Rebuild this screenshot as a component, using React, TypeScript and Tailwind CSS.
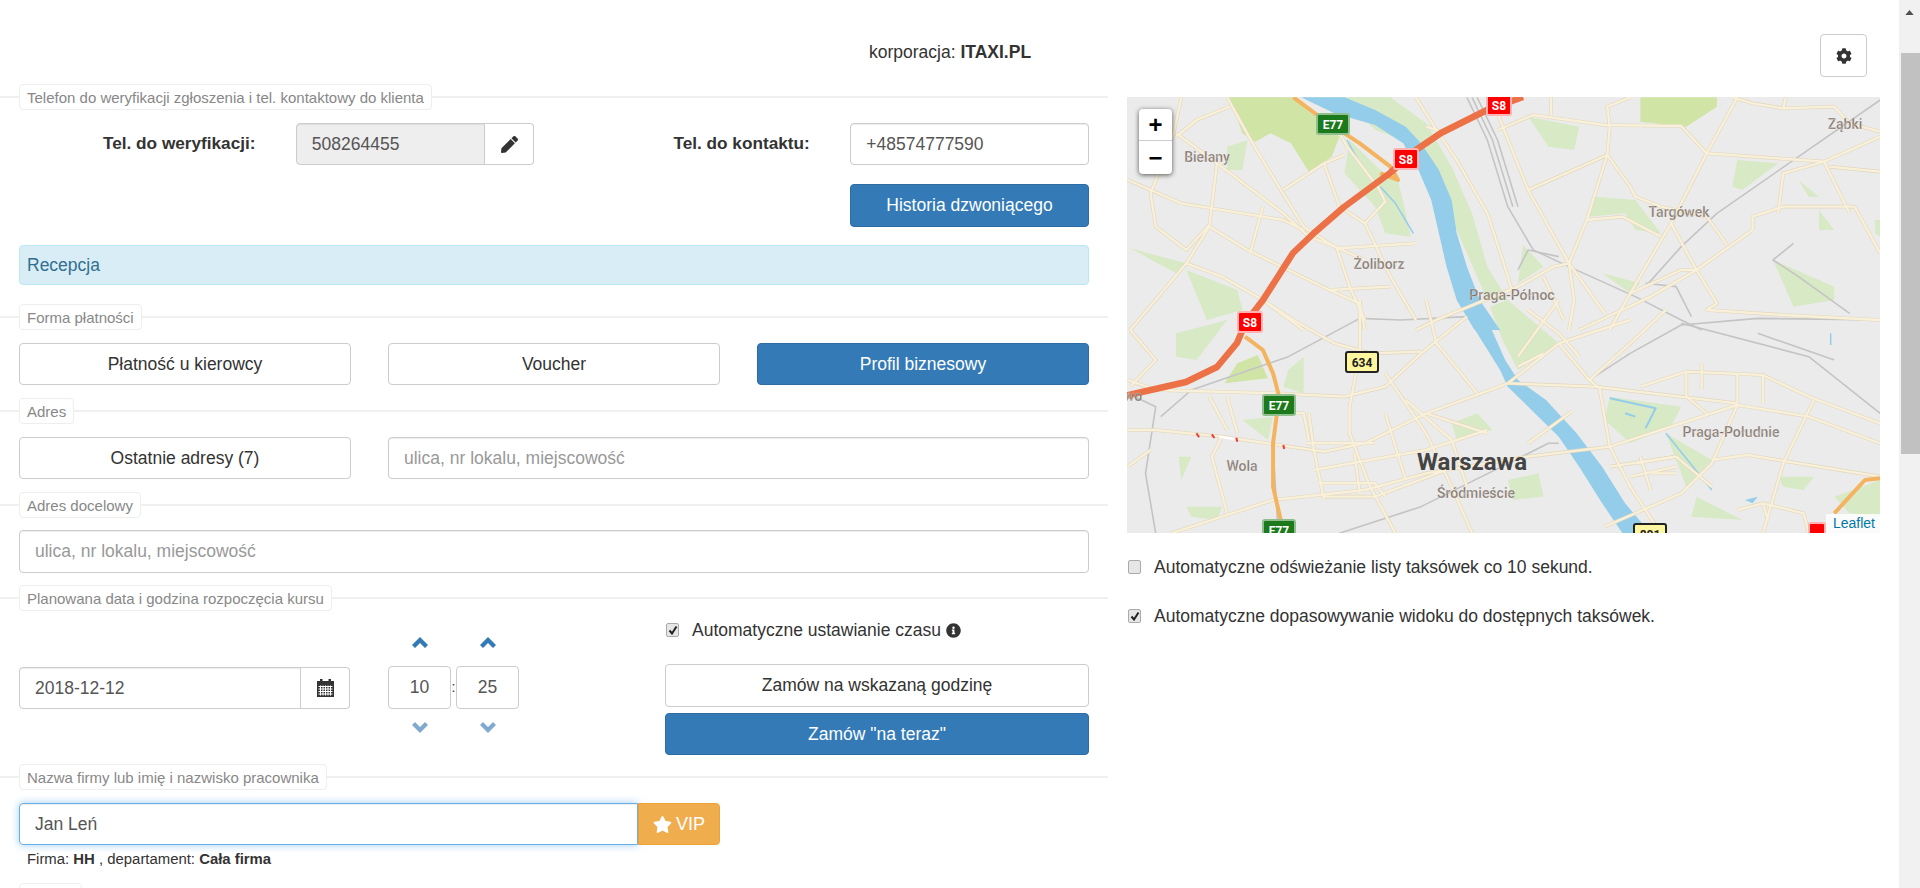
import type { ReactNode } from "react";
import { FaCog, FaInfoCircle, FaPen, FaStar } from "react-icons/fa";

const FONT = "font-['Liberation_Sans',Arial,sans-serif]";

const inputBase =
  "h-[42px] rounded-[4px] border border-[#ccc] shadow-[inset_0_1px_1px_rgba(0,0,0,0.075)] px-[15px] text-[17.5px] text-[#555] flex items-center";
const btnDefault =
  "h-[42px] flex items-center justify-center rounded-[4px] border border-[#ccc] bg-white text-[17.5px] text-[#333]";
const btnPrimary =
  "flex items-center justify-center rounded-[4px] border border-[#2e6da4] bg-[#337ab7] text-[17.5px] text-white";

function Legend({ children, className = "" }: { children: ReactNode; className?: string }) {
  return (
    <div className={`flex items-center h-[26px] ${className}`}>
      <span className="h-[2px] w-[19px] bg-[#f0f0f0]" />
      <span className="h-[26px] flex items-center rounded-[4px] border border-[#eee] bg-white px-[7px] text-[15px] leading-none text-[#888] whitespace-nowrap">
        {children}
      </span>
      <span className="h-[2px] flex-1 bg-[#f0f0f0]" />
    </div>
  );
}

function Check({ checked = false }: { checked?: boolean }) {
  return (
    <span className="flex h-[14px] w-[13px] shrink-0 items-center justify-center rounded-[2px] border border-[#aaa] bg-[#e6e6e6]">
      {checked && (
        <svg viewBox="0 0 10 10" className="h-[10px] w-[10px]">
          <path d="M1.5 5.5 L4 8.5 L8.5 1.5" fill="none" stroke="#222" strokeWidth="2" />
        </svg>
      )}
    </span>
  );
}

function Chevron({ up, className }: { up?: boolean; className: string }) {
  return (
    <svg viewBox="0 0 16 11" className={`h-[11px] w-[16px] ${className}`}>
      <path d={up ? "M8 0L16 8L13 11L8 6L3 11L0 8Z" : "M8 11L16 3L13 0L8 5L3 0L0 3Z"} fill="currentColor" />
    </svg>
  );
}

function CalendarIcon() {
  return (
    <svg viewBox="0 0 17 18" className="h-[18px] w-[17px]">
      <path d="M3 0h2.5v2H3zM11.5 0H14v2h-2.5z" fill="#333" />
      <path d="M0 2h17v16H0z" fill="#333" />
      <path
        d="M1.5 7.5h14M1.5 10h14M1.5 12.5h14M1.5 15h14M3.5 6.5v10M6 6.5v10M8.5 6.5v10M11 6.5v10M13.5 6.5v10"
        stroke="#fff"
        strokeWidth="1"
        fill="none"
      />
    </svg>
  );
}

function Spinner({ value }: { value: string }) {
  return (
    <div className="flex w-[63px] flex-col items-center">
      <Chevron up className="mt-[26px] text-[#337ab7]" />
      <div className="mt-[18px] flex h-[43px] w-[63px] items-center justify-center rounded-[4px] border border-[#ccc] text-[17.5px] text-[#555]">
        {value}
      </div>
      <Chevron className="mt-[13px] text-[#7fa9cf]" />
    </div>
  );
}

const ROAD = "#f8f0da";
const EDGE = "#e2d7bc";

// drogi, w ukladzie wycinka gornej i dolnej czesci mapy
const roadsTop = [
  "M210 292L260 430L315 570L360 680L420 740L480 780",
  "M110 400L190 490L320 640L370 710L430 745L580 730",
  "M15 540L60 570L120 610L320 660L360 690",
  "M120 292L105 400L60 580L70 680L130 750L175 675",
  "M190 490L175 680L130 790L20 990",
  "M110 410L150 360L215 320",
  "M130 790L200 830L280 900L360 990",
  "M175 680L250 750L410 870L470 910L480 990",
  "M320 570L400 490L440 465",
  "M400 490L430 620L480 670L520 605L505 560L445 440L430 400",
  "M280 620L255 760",
  "M425 745L450 860L480 960",
  "M480 670L530 830L580 960",
  "M580 292L620 390L660 480L720 640L750 780L770 880",
  "M740 340L800 570L880 790L950 940",
  "M740 390L810 345L950 375L1100 378L1150 460L1380 485L1490 410",
  "M1150 460L1210 292",
  "M1150 460L1080 670L1000 880L960 990",
  "M800 570L955 465L1000 560L1010 590L1060 620L1150 650L1190 735",
  "M955 465L960 380L955 320L1000 292",
  "M955 465L915 660L880 790",
  "M915 660L985 650L1060 710",
  "M1380 485L1300 520L1290 640",
  "M1390 500L1490 515",
  "M1240 690L1130 810L1040 890L900 990",
  "M880 790L850 800L780 860L620 960L580 990",
  "M1080 670L1130 810L1170 910L1150 930L1300 945L1490 960",
  "M1200 292L1240 310L1300 325L1400 320L1430 370L1490 395",
  "M1240 690L1240 650L1300 620L1440 620L1490 760",
  "M845 292L845 345",
  "M1300 325L1305 292",
  "M410 870L530 860",
  "M600 380L640 400",
  "M1000 880L1100 810L1130 810",
  "M880 790L890 900L880 990",
  "M830 830L870 960",
  "M1380 485L1430 640",
];

const roadsBottom = [
  "M15 390L70 390L200 410L400 455L480 430L600 340L700 285L760 250L860 130",
  "M15 240L70 270L300 280L440 290L520 260L590 160L680 50",
  "M450 320L470 160L470 0",
  "M280 0L340 60L420 130L490 160L590 155",
  "M520 220L600 400L650 560L690 700",
  "M450 320L450 400L490 560L540 700",
  "M200 650L300 600L480 570L600 520L800 470L960 440L1210 315L1350 350L1490 430",
  "M760 250L930 260L1210 310",
  "M960 440L1000 560L1060 700",
  "M1210 315L1160 490L1100 580L950 680",
  "M1160 480L1230 465L1490 530",
  "M1360 300L1300 490L1260 700",
  "M1210 630L1260 610L1340 640L1350 700",
  "M885 335L800 430",
  "M860 130L920 240L940 265L960 440",
  "M920 240L1000 130L1070 30",
  "M1020 260L1110 215L1260 225L1350 290L1490 370",
  "M1110 215L1110 290L1150 340",
  "M175 290L210 390",
  "M210 290L230 400",
  "M200 410L180 470L210 640",
  "M370 340L380 450L400 600",
  "M365 430L500 430",
  "M390 550L500 550L520 590",
  "M20 90L70 180L20 260",
  "M600 0L620 130L700 280",
  "M860 0L780 170",
  "M1140 190L1140 270",
  "M1040 520L1090 520",
  "M960 500L1090 470L1160 560",
  "M380 510L600 450L720 390",
  "M400 590L500 590L640 510",
  "M560 300L650 420L680 560",
  "M600 340L720 400",
  "M340 340L360 340L370 420",
  "M460 460L470 580",
  "M520 340L560 540",
  "M1010 490L1090 470",
  "M1000 530L1090 500",
  "M1020 470L1040 570",
  "M1210 220L1210 310",
  "M1260 225L1260 310",
  "M1270 660L1260 610",
  "M800 30L860 100L900 170",
  "M830 160L780 200",
  "M860 130L1000 60",
  "M100 700L200 650",
  "M60 450L15 500",
];

const railsTop = [
  "M680 292L720 420L760 620L810 750L880 800L1010 890L1100 960L1140 990",
  "M690 292L730 420L770 620",
  "M700 292L740 420L780 620",
  "M1490 300L1330 470L1170 640L1100 740L1030 860",
  "M1320 730L1280 780L1330 830L1430 940",
  "M1030 850L1090 860L1120 950",
  "M780 810L800 750L860 770",
];

const railsBottom = [
  "M15 280L70 320L50 520L70 700",
  "M80 350L140 270L330 170L470 55L550 60L680 50",
  "M930 230L1000 160L1100 75L1250 55L1490 60",
  "M1100 70L1350 170L1490 340",
  "M1250 100L1400 180",
  "M300 440L310 700",
  "M430 700L590 620L840 430L860 430",
];

function Badge({ x, y, w, fill, edge, text, color = "#fff" }: { x: number; y: number; w: number; fill: string; edge: string; text: string; color?: string }) {
  return (
    <g>
      <rect x={x - w / 2} y={y - 10} width={w} height={20} rx={2} fill={fill} stroke={edge} strokeWidth={2} />
      <text x={x} y={y + 4.5} textAnchor="middle" fontSize="12" fontWeight="700" fill={color} fontFamily="Roboto, sans-serif">
        {text}
      </text>
    </g>
  );
}

function Place({ x, y, text, size = 14 }: { x: number; y: number; text: string; size?: number }) {
  return (
    <text x={x} y={y} textAnchor="middle" fontSize={size} fontWeight="500" fill="#7f7168" stroke="#ffffff" strokeOpacity="0.5" strokeWidth="0.4" fontFamily="Roboto, sans-serif">
      {text}
    </text>
  );
}

function MapDrawing() {
  const topTf = "translate(1120 0) scale(0.5102 0.3333)";
  const botTf = "translate(1120 300) scale(0.5102 0.3333)";
  const strokes = (d: string, color: string, width: number) => (
    <path key={d + color} d={d} fill="none" stroke={color} strokeWidth={width} strokeLinejoin="round" vectorEffect="non-scaling-stroke" />
  );
  return (
    <svg viewBox="1127 97 753 436" className="block h-[436px] w-[753px]">
      <defs>
        <filter id="soft" x="0" y="0" width="100%" height="100%">
          <feGaussianBlur stdDeviation="0.4" />
        </filter>
      </defs>
      <rect x="1127" y="97" width="753" height="436" fill="#ebebeb" />
      <g filter="url(#soft)">
        {/* parki */}
        <g transform={topTf} fill="#d0e4a6">
          <path d="M215 292L340 292L430 410L415 470L370 515L335 430L295 400L265 425L240 400Z" />
          <path d="M1020 292L1170 292L1170 320L1110 380L1020 365Z" />
        </g>
        <g transform={topTf} fill="#d8e9c6">
          <path d="M440 292L530 292L600 370L650 500L690 640L720 800L760 900L720 900L680 760L640 620L610 500L575 430L500 390Z" />
          <path d="M450 420L510 510L545 540L560 640L570 710L520 700L500 620L440 520Z" />
          <path d="M210 440L250 420L240 510L210 510Z" />
          <path d="M800 350L900 380L890 450L840 440Z" />
          <path d="M20 745L130 790L110 820Z" />
          <path d="M130 810L230 870L240 930L170 960Z" />
          <path d="M1210 480L1290 490L1220 570L1200 560Z" />
          <path d="M930 590L1010 600L1060 700L1010 690L990 640L920 650Z" />
          <path d="M790 735L830 800L780 850Z" />
          <path d="M945 820L1020 850L1000 880Z" />
          <path d="M1280 780L1400 860L1400 900L1320 920Z" />
          <path d="M1370 630L1400 690L1370 690Z" />
          <path d="M1480 660L1490 660L1490 710L1480 700Z" />
          <path d="M1330 540L1370 590L1350 590Z" />
        </g>
        <g transform={botTf} fill="#d8e9c6">
          <path d="M205 250L230 190L270 165L290 235Z" fill="#d0e4a6" />
          <path d="M960 290L1100 320L1080 380L1000 430L950 360Z" />
          <path d="M725 20L760 0L860 130L830 160L780 210L750 120Z" />
          <path d="M1070 400L1160 480L1110 560Z" />
          <path d="M1130 590L1220 660L1120 650Z" />
          <path d="M110 100L210 60L150 180L110 170Z" />
          <path d="M330 210L360 170L360 280L320 260Z" />
          <path d="M650 370L700 340L730 390L660 420Z" />
          <path d="M115 470L140 470L120 540Z" />
          <path d="M240 360L300 350L290 420Z" />
          <path d="M1400 590L1490 540L1490 650L1430 640Z" />
          <path d="M130 620L200 620L190 660L140 650Z" />
          <path d="M760 540L820 520L830 590L770 600Z" />
          <path d="M1290 530L1360 530L1340 570L1300 560Z" />
        </g>
        {/* Wisla */}
        <g transform={topTf}>
          <path d="M355 292L420 340L500 375L555 430L585 510L610 600L625 700L640 800L660 900L695 990L745 990L705 900L680 800L660 700L650 600L625 510L590 430L560 380L500 330L440 292Z" fill="#94cdea" />
          {strokes("M510 560L540 610L575 700", "#94cdea", 1.5)}
          {strokes("M445 420L470 490", "#94cdea", 1.5)}
        </g>
        <g transform={botTf}>
          <path d="M660 0L700 100L745 210L760 260L800 320L860 410L900 500L945 610L985 700L1040 700L990 610L945 500L895 400L835 300L780 240L755 180L720 60L705 0Z" fill="#94cdea" />
          {strokes("M960 295L1050 325L1030 385M990 340L1010 350", "#94cdea", 2)}
          {strokes("M1070 400L1160 570", "#94cdea", 1.5)}
          <path d="M1225 600L1250 590L1240 610Z" fill="#94cdea" />
          {strokes("M1393 100L1393 135", "#94cdea", 1.5)}
        </g>
        {/* koleje i drogi */}
        <g transform={topTf}>{railsTop.map((d) => strokes(d, "#c4c4c4", 1.6))}</g>
        <g transform={botTf}>{railsBottom.map((d) => strokes(d, "#c4c4c4", 1.6))}</g>
        <g transform={topTf}>{roadsTop.map((d) => strokes(d, EDGE, 3.6))}</g>
        <g transform={botTf}>{roadsBottom.map((d) => strokes(d, EDGE, 3.6))}</g>
        <g transform={topTf}>{roadsTop.map((d) => strokes(d, ROAD, 2.4))}</g>
        <g transform={botTf}>{roadsBottom.map((d) => strokes(d, ROAD, 2.4))}</g>
        {/* E77 */}
        <g transform={topTf}>
          {strokes("M340 292L400 360L470 430L530 500L545 540L510 520", "#f4b35f", 4)}
        </g>
        <g transform={botTf}>
          {strokes("M245 110L280 150L300 220L312 290L300 430L300 560L315 660L315 700", "#f4b35f", 4)}
          {strokes("M1490 535L1460 540L1400 640", "#f4b35f", 4)}
        </g>
        {/* S8 */}
        <path
          d="M1120 397L1186 382L1217 367L1237 343L1246 322L1263 300L1293 253L1314 233L1344 207L1390 173L1416 150L1441 133L1487 110L1523 97"
          fill="none"
          stroke="#ec7146"
          strokeWidth="6.5"
          strokeLinejoin="round"
        />
        {/* przerwy na remontowanej drodze */}
        <g transform={botTf}>
          {strokes("M150 400L155 412M180 403L185 414M228 413L230 425M320 435L322 447", "#f03a3a", 2)}
          {strokes("M195 410L225 418", "#ffffff", 2.5)}
        </g>
      </g>
      <Badge x={1499} y={105} w={24} fill="#f00" edge="#ffb3b3" text="S8" />
      <Badge x={1406} y={159} w={24} fill="#f00" edge="#ffb3b3" text="S8" />
      <Badge x={1250} y={322} w={24} fill="#f00" edge="#ffb3b3" text="S8" />
      <Badge x={1817} y={533} w={16} fill="#f00" edge="#ffb3b3" text="" />
      <Badge x={1333} y={124} w={32} fill="#1c7a1c" edge="#8fbf8f" text="E77" />
      <Badge x={1279} y={405} w={32} fill="#1c7a1c" edge="#8fbf8f" text="E77" />
      <Badge x={1279} y={530} w={32} fill="#1c7a1c" edge="#8fbf8f" text="E77" />
      <Badge x={1362} y={362} w={32} fill="#fff7a0" edge="#222" text="634" color="#222" />
      <Badge x={1650} y={534} w={32} fill="#fff7a0" edge="#222" text="801" color="#222" />
      <Place x={1207} y={162} text="Bielany" />
      <Place x={1845} y={129} text="Ząbki" />
      <Place x={1679} y={217} text="Targówek" />
      <Place x={1379} y={269} text="Żoliborz" />
      <Place x={1512} y={300} text="Praga-Północ" />
      <Place x={1242} y={471} text="Wola" />
      <Place x={1476} y={498} text="Śródmieście" />
      <Place x={1731} y={437} text="Praga-Południe" />
      <Place x={1133} y={401} text="wo" />
      <text x={1472} y={470} textAnchor="middle" fontSize="24" fontWeight="700" fill="#444" fontFamily="Roboto, sans-serif">
        Warszawa
      </text>
    </svg>
  );
}

export default function App() {
  return (
    <div className={`${FONT} flex h-[888px] overflow-hidden bg-white text-[17.5px] text-[#333]`}>
      <div className="flex-1 min-w-0">
        <header className="flex h-[84px] items-start">
          <p className="ml-[869px] mt-[43px] leading-[18px]">
            korporacja: <b>ITAXI.PL</b>
          </p>
          <button className="ml-auto mr-[32px] mt-[34px] flex h-[43px] w-[47px] items-center justify-center rounded-[4px] border border-[#ccc] bg-white">
            <FaCog className="h-[16px] w-[16px] text-[#333]" />
          </button>
        </header>

        <div className="flex">
          {/* formularz */}
          <div className="w-[1108px] shrink-0">
            <Legend>Telefon do weryfikacji zgłoszenia i tel. kontaktowy do klienta</Legend>
            <div className="ml-[19px] mr-[19px]">
              <div className="mt-[13px] flex items-center">
                <span className="ml-[84px] w-[153px] whitespace-nowrap text-[17.2px] font-bold">Tel. do weryfikacji:</span>
                <div className="ml-[40px] flex w-[239px]">
                  <div className={`${inputBase} flex-1 rounded-r-none bg-[#eee]`}>508264455</div>
                  <div className="flex h-[42px] w-[49px] items-center justify-center rounded-r-[4px] border border-l-0 border-[#ccc] bg-white">
                    <FaPen className="h-[17px] w-[17px] text-[#333]" />
                  </div>
                </div>
                <span className="ml-[139px] w-[137px] whitespace-nowrap text-[17.2px] font-bold">Tel. do kontaktu:</span>
                <div className={`${inputBase} ml-[40px] w-[239px]`}>+48574777590</div>
              </div>
              <div className="mt-[19px] flex justify-end">
                <button className={`${btnPrimary} h-[43px] w-[239px]`}>Historia dzwoniącego</button>
              </div>
              <div className="mt-[18px] flex h-[40px] items-center rounded-[4px] border border-[#bce8f1] bg-[#d9edf7] px-[7px] text-[#31708f]">
                Recepcja
              </div>
            </div>

            <Legend className="mt-[19px]">Forma płatności</Legend>
            <div className="ml-[19px] mr-[19px] mt-[13px] grid grid-cols-3 gap-x-[37px]">
              <button className={btnDefault}>Płatność u kierowcy</button>
              <button className={btnDefault}>Voucher</button>
              <button className={`${btnPrimary} h-[42px]`}>Profil biznesowy</button>
            </div>

            <Legend className="mt-[13px]">Adres</Legend>
            <div className="ml-[19px] mr-[19px] mt-[13px] flex gap-x-[37px]">
              <button className={`${btnDefault} w-[332px] shrink-0`}>Ostatnie adresy (7)</button>
              <div className={`${inputBase} flex-1 text-[#999]`}>ulica, nr lokalu, miejscowość</div>
            </div>

            <Legend className="mt-[13px]">Adres docelowy</Legend>
            <div className={`${inputBase} ml-[19px] mr-[19px] mt-[12px] h-[43px] text-[#999]`}>
              ulica, nr lokalu, miejscowość
            </div>

            <Legend className="mt-[12px]">Planowana data i godzina rozpoczęcia kursu</Legend>
            <div className="ml-[19px] mr-[19px] flex">
              <div className="mt-[56px] flex h-[42px] w-[331px] shrink-0">
                <div className={`${inputBase} flex-1 rounded-r-none`}>2018-12-12</div>
                <div className="flex h-[42px] w-[49px] items-center justify-center rounded-r-[4px] border border-l-0 border-[#ccc]">
                  <CalendarIcon />
                </div>
              </div>
              <div className="ml-[38px] flex shrink-0 items-start">
                <Spinner value="10" />
                <span className="mt-[66px] w-[5px] text-center text-[14px]">:</span>
                <Spinner value="25" />
              </div>
              <div className="ml-[146px] flex-1">
                <label className="mt-[10px] flex h-[18px] items-center pl-[1px]">
                  <Check checked />
                  <span className="ml-[13px]">Automatyczne ustawianie czasu</span>
                  <FaInfoCircle className="ml-[5px] h-[15px] w-[15px] text-[#333]" />
                </label>
                <button className={`${btnDefault} mt-[25px] h-[43px] w-full`}>Zamów na wskazaną godzinę</button>
                <button className={`${btnPrimary} mt-[6px] h-[42px] w-full`}>Zamów "na teraz"</button>
              </div>
            </div>

            <Legend className="mt-[9px]">Nazwa firmy lub imię i nazwisko pracownika</Legend>
            <div className="ml-[19px] mt-[13px] flex w-[701px]">
              <div className="flex h-[42px] w-[619px] items-center rounded-l-[4px] border border-[#66afe9] px-[15px] text-[#555] shadow-[inset_0_1px_1px_rgba(0,0,0,0.075),0_0_8px_rgba(102,175,233,0.6)]">
                Jan Leń
              </div>
              <button className="flex h-[42px] w-[82px] items-center justify-center gap-[4px] rounded-r-[4px] border border-[#eea236] bg-[#f0ad4e] text-[18px] text-white">
                <FaStar className="h-[19px] w-[19px]" />
                VIP
              </button>
            </div>
            <p className="ml-[27px] mt-[5px] text-[14.9px] leading-[18px]">
              Firma: <b>HH</b> , departament: <b>Cała firma</b>
            </p>
            <Legend className="mt-[15px]">
              <span className="w-[47px]" />
            </Legend>
          </div>

          {/* mapa */}
          <div className="ml-[19px] w-[753px] shrink-0 pt-[13px]">
            <div className="relative h-[436px] overflow-hidden">
              <MapDrawing />
              <div className="absolute left-[12px] top-[12px] w-[33px] overflow-hidden rounded-[4px] bg-white shadow-[0_1px_5px_rgba(0,0,0,0.65)]">
                <div className="flex h-[32px] items-center justify-center border-b border-[#ccc] text-[24px] font-bold leading-none text-black">+</div>
                <div className="flex h-[33px] items-center justify-center text-[24px] font-bold leading-none text-black">−</div>
              </div>
              <div className="absolute bottom-0 right-0 flex h-[19px] items-center bg-white/80 pl-[7px] pr-[5px] text-[14px] text-[#0078a8]">
                Leaflet
              </div>
            </div>
            <label className="mt-[25px] flex h-[18px] items-center pl-[1px]">
              <Check />
              <span className="ml-[13px]">Automatyczne odświeżanie listy taksówek co 10 sekund.</span>
            </label>
            <label className="mt-[31px] flex h-[18px] items-center pl-[1px]">
              <Check checked />
              <span className="ml-[13px]">Automatyczne dopasowywanie widoku do dostępnych taksówek.</span>
            </label>
          </div>
        </div>
      </div>

      {/* pasek przewijania */}
      <div className="flex w-[21px] shrink-0 flex-col items-center bg-[#f1f1f1]">
        <svg viewBox="0 0 10 6" className="mt-[10px] h-[5px] w-[9px]">
          <path d="M5 0L10 6H0Z" fill="#505050" />
        </svg>
        <div className="mt-[38px] ml-[1px] h-[401px] w-[19px] bg-[#c1c1c1]" />
      </div>
    </div>
  );
}
